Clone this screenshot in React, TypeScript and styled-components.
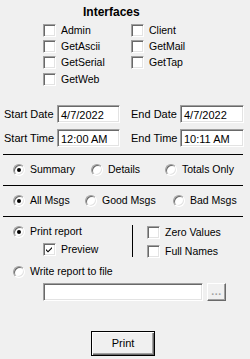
import styled, { createGlobalStyle } from 'styled-components';

const GlobalStyle = createGlobalStyle`
  body {
    margin: 0;
    background: #f0f0f0;
  }
`;

const interfaces = [
  ['Admin', 'Client'],
  ['GetAscii', 'GetMail'],
  ['GetSerial', 'GetTap'],
  ['GetWeb'],
];

const Check: React.FC<{ checked?: boolean }> = ({ checked }) => (
  <Box>
    {checked && (
      <svg width="9" height="9" viewBox="0 0 9 9">
        <path d="M1 4 L3 6 L7 2 L7 3.6 L3 7.6 L1 5.6 Z" fill="#000" />
      </svg>
    )}
  </Box>
);

const Radio: React.FC<{ checked?: boolean }> = ({ checked }) => (
  <Circle>{checked && <Dot />}</Circle>
);

const App = () => {
  return (
    <Page>
      <GlobalStyle />
      <Title>Interfaces</Title>
      <CheckGrid>
        {interfaces.flat().map(name => (
          <Option key={name}>
            <Check />
            <Label>{name}</Label>
          </Option>
        ))}
      </CheckGrid>

      <DateRow>
        <FieldLabel $w={53}>Start Date</FieldLabel>
        <Input $w={63}>4/7/2022</Input>
        <FieldLabel $w={49} $ml={11}>
          End Date
        </FieldLabel>
        <Input $w={64}>4/7/2022</Input>
      </DateRow>
      <DateRow $mt={6}>
        <FieldLabel $w={53}>Start Time</FieldLabel>
        <Input $w={63}>12:00 AM</Input>
        <FieldLabel $w={49} $ml={11}>
          End Time
        </FieldLabel>
        <Input $w={64}>10:11 AM</Input>
      </DateRow>

      <Rule $mt={7} />
      <RadioRow $cols="78px 74px 1fr">
        <Option>
          <Radio checked />
          <Label>Summary</Label>
        </Option>
        <Option>
          <Radio />
          <Label>Details</Label>
        </Option>
        <Option>
          <Radio />
          <Label>Totals Only</Label>
        </Option>
      </RadioRow>
      <Rule />
      <RadioRow $cols="72px 88px 1fr">
        <Option>
          <Radio checked />
          <Label>All Msgs</Label>
        </Option>
        <Option>
          <Radio />
          <Label>Good Msgs</Label>
        </Option>
        <Option>
          <Radio />
          <Label>Bad Msgs</Label>
        </Option>
      </RadioRow>
      <Rule />

      <Output>
        <OutputLeft>
          <Line>
            <Option>
              <Radio checked />
              <Label>Print report</Label>
            </Option>
          </Line>
          <Line $pl={30}>
            <Option>
              <Check checked />
              <Label>Preview</Label>
            </Option>
          </Line>
        </OutputLeft>
        <Divider />
        <OutputRight>
          <Line $h={19}>
            <Option>
              <Check />
              <Label>Zero Values</Label>
            </Option>
          </Line>
          <Line $h={19}>
            <Option>
              <Check />
              <Label>Full Names</Label>
            </Option>
          </Line>
        </OutputRight>
      </Output>

      <Line $pl={13} $mt={2}>
        <Option>
          <Radio />
          <Label>Write report to file</Label>
        </Option>
      </Line>
      <FileRow>
        <Input $w={160} />
        <SmallButton>...</SmallButton>
      </FileRow>

      <PrintButton>Print</PrintButton>
    </Page>
  );
};

const Page = styled.div`
  display: flex;
  flex-direction: column;
  width: 250px;
  height: 359px;
  overflow: hidden;
  background: #f0f0f0;
  font-family: 'Liberation Sans', Arial, sans-serif;
  font-size: 10.5px;
  color: #000;
`;

const Title = styled.div`
  margin: 5px 0 0 83px;
  height: 14px;
  line-height: 14px;
  font-size: 12px;
  font-weight: bold;
`;

const CheckGrid = styled.div`
  display: grid;
  grid-template-columns: 88px 88px;
  grid-auto-rows: 16.4px;
  margin-top: 3px;
  padding-left: 43px;
`;

const Option = styled.div`
  display: flex;
  align-items: center;
  gap: 5px;
  white-space: nowrap;
`;

const Label = styled.span`
  line-height: 13px;
`;

const Box = styled.div`
  display: flex;
  align-items: center;
  justify-content: center;
  box-sizing: border-box;
  width: 13px;
  height: 13px;
  flex: none;
  background: #fff;
  border: 1px solid;
  border-color: #a0a0a0 #fff #fff #a0a0a0;
  box-shadow: inset 1px 1px #696969, inset -1px -1px #e3e3e3;
`;

const Circle = styled.div`
  display: flex;
  align-items: center;
  justify-content: center;
  box-sizing: border-box;
  width: 12px;
  height: 12px;
  flex: none;
  border-radius: 50%;
  background: #fff;
  border: 1px solid;
  border-color: #a0a0a0 #fff #fff #a0a0a0;
  box-shadow: inset 1px 1px #696969, inset -1px -1px #e3e3e3;
`;

const Dot = styled.div`
  width: 4px;
  height: 4px;
  border-radius: 50%;
  background: #000;
`;

const DateRow = styled.div<{ $mt?: number }>`
  display: flex;
  align-items: center;
  height: 18px;
  margin-top: ${p => p.$mt ?? 17}px;
  padding-left: 4px;
`;

const FieldLabel = styled.span<{ $w: number; $ml?: number }>`
  width: ${p => p.$w}px;
  margin-left: ${p => p.$ml ?? 0}px;
  font-size: 11px;
  white-space: nowrap;
`;

const Input = styled.div<{ $w: number }>`
  box-sizing: border-box;
  width: ${p => p.$w}px;
  height: 18px;
  padding: 2px 0 0 3px;
  font-size: 11px;
  line-height: 14px;
  background: #fff;
  border: 1px solid;
  border-color: #a0a0a0 #fff #fff #a0a0a0;
  box-shadow: inset 1px 1px #696969, inset -1px -1px #e3e3e3;
`;

const Rule = styled.div<{ $mt?: number }>`
  height: 1px;
  margin: ${p => p.$mt ?? 0}px 7px 0 3px;
  background: #000;
`;

const RadioRow = styled.div<{ $cols: string }>`
  display: grid;
  grid-template-columns: ${p => p.$cols};
  align-items: center;
  height: 30px;
  padding-left: 13px;
`;

const Output = styled.div`
  display: flex;
  margin-top: 6px;
`;

const OutputLeft = styled.div`
  display: flex;
  flex-direction: column;
  width: 132px;
  padding-left: 13px;
  box-sizing: border-box;
`;

const Line = styled.div<{ $h?: number; $pl?: number; $mt?: number }>`
  display: flex;
  align-items: center;
  height: ${p => p.$h ?? 18}px;
  padding-left: ${p => p.$pl ?? 0}px;
  margin-top: ${p => p.$mt ?? 0}px;
`;

const Divider = styled.div`
  width: 1px;
  height: 32px;
  margin: 2px 14px 0 0;
  background: #000;
`;

const OutputRight = styled.div`
  display: flex;
  flex-direction: column;
`;

const FileRow = styled.div`
  display: flex;
  gap: 4px;
  margin-top: 2px;
  padding-left: 43px;
`;

const SmallButton = styled.div`
  box-sizing: border-box;
  width: 19px;
  height: 18px;
  line-height: 14px;
  text-align: center;
  color: #a0a0a0;
  font-weight: bold;
  letter-spacing: 0.5px;
  background: #f0f0f0;
  border: 1px solid;
  border-color: #fff #696969 #696969 #fff;
  box-shadow: inset -1px -1px #a0a0a0;
`;

const PrintButton = styled.div`
  box-sizing: border-box;
  width: 64px;
  height: 25px;
  margin: 30px 0 0 91px;
  display: flex;
  align-items: center;
  justify-content: center;
  font-size: 11px;
  background: #f0f0f0;
  border: 1px solid #000;
  box-shadow: inset 1px 1px #fff, inset -1px -1px #696969, inset -2px -2px #a0a0a0;
`;

export default App;
